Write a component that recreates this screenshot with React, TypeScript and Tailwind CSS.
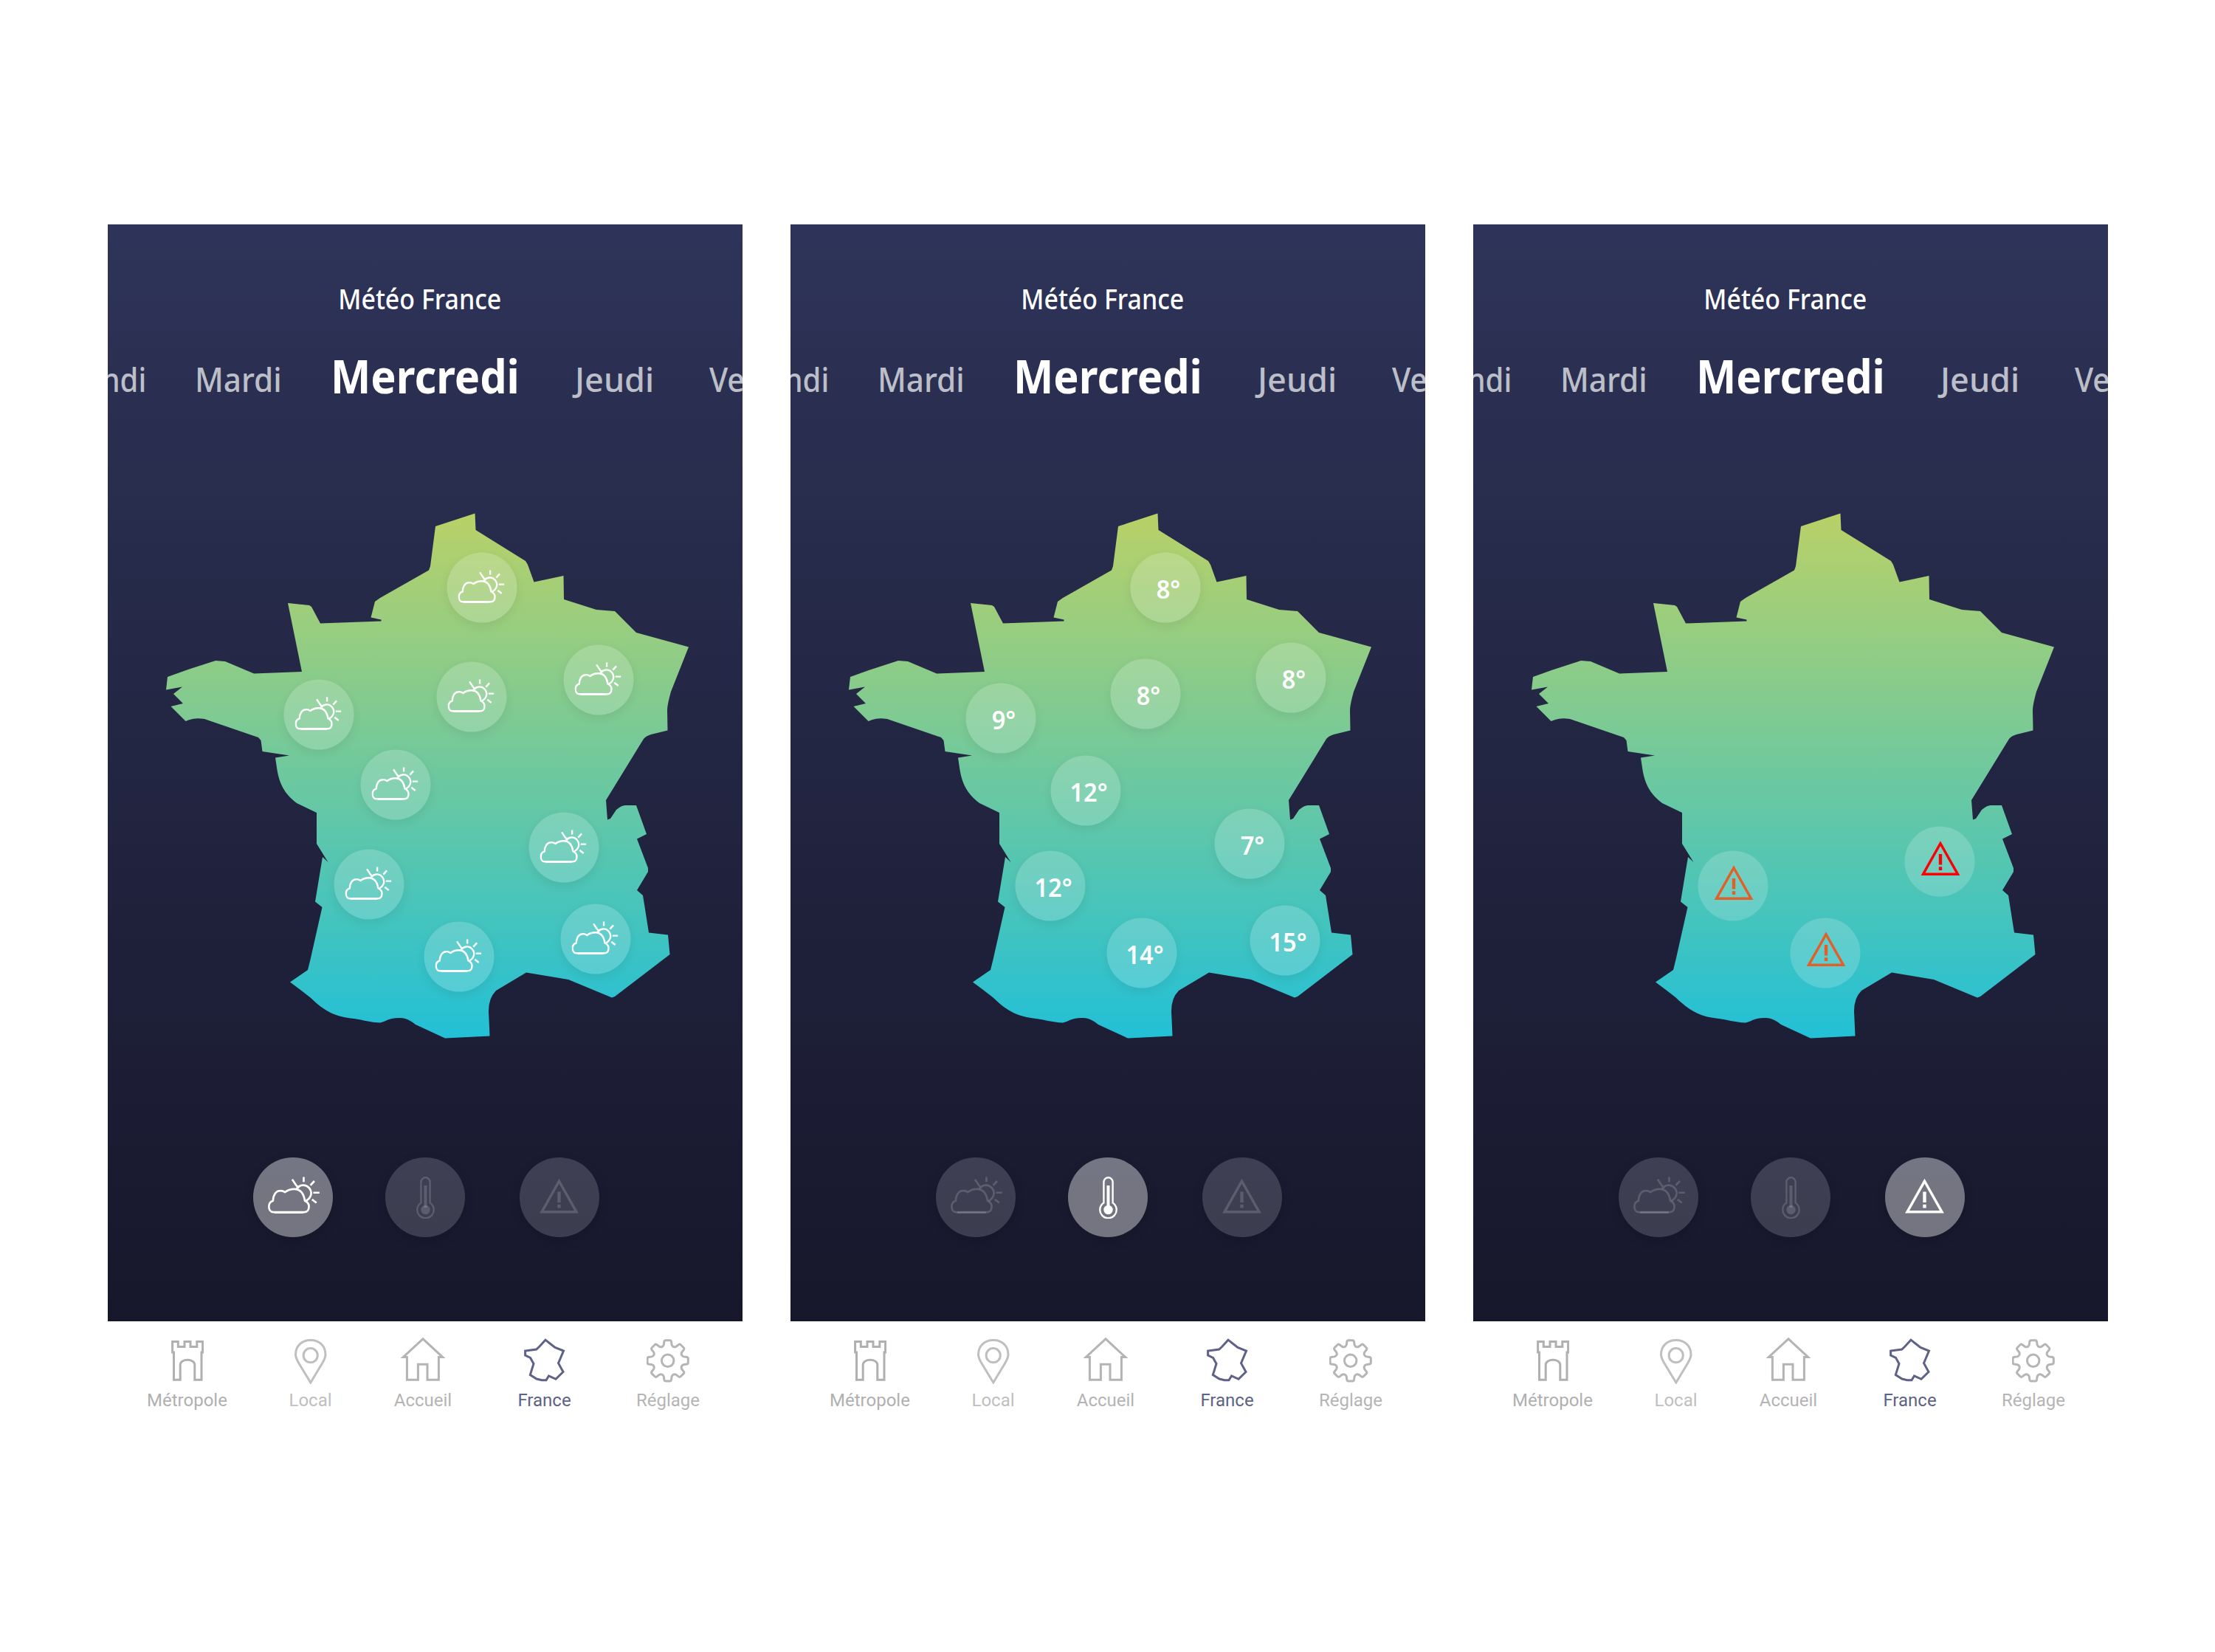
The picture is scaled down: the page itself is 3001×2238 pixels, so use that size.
import type { ReactNode } from "react";

type Mode = "weather" | "temperature" | "alert";

const FRANCE =
  "M390 817L419 820L422 822L434 844.5L516.5 841.5V839.5L502.5 836.5L508 815L515 810L581 772.5L583 767L590 713L643.5 695.5L644.5 718L712 760L715 765L723.5 788.5L763.5 780L764 812L808 826L833 828L862 857L933 876.5L909 937Q904 955 904 962L904.5 989.5L882 995Q875 997 872 1001L821 1084L823 1110.5L827 1109L835 1097Q842 1091 847 1091H862L876 1130L863 1136.5L878 1176V1181L863 1206L871 1213L879 1263.5L905 1266.5L907.5 1293L833 1350L829 1351.5L770 1327L713 1317.5L672 1342Q662 1352 662 1370L663.5 1403.5L603 1406.5L563 1388C553 1380 548 1379 540 1379C527 1379 525 1383 515 1385.5C500 1385 490 1381 475 1379.5C450 1376 438 1368 420 1351Q406 1340 393 1330.5L417 1314L420.5 1300L436.5 1229L427 1221.5L437 1161L444.5 1168L429 1143V1101L402 1088C385 1075 378 1061 375 1040L373 1026.5L392 1023.5L355.5 1018L353.5 1003L350 999L277 974Q265 972 257 975L251.5 977L231.5 957L248 953L235 940L247 930.5L225 934.5L227 917L252 908L292 895L305 896L344 912.5L409 910Z";

function CloudSun({ className }: { className: string }) {
  return (
    <svg viewBox="0 0 63 45" className={className} fill="none" stroke="currentColor" strokeWidth="2.4" strokeLinejoin="round">
      <path d="M6.5 43.3C3 43.3 1.2 40 1.2 36.5C1.2 33 3 30.5 6.2 29.5C6.5 22 10 17.2 15 17.2C17.5 17 19.3 17.8 21 19C23.5 16.8 28 15 33 15.2C40.5 15.8 44 22.5 45 29.5C48.5 31 50 33.2 50 36.5C50 40.5 48 43.3 44.5 43.3Z" />
      <path d="M8 43.8H43" strokeWidth="2.6" />
      <path d="M35 14.5C39 9.5 46 9 50 13.5C54.5 18.5 53.5 25.5 46.5 29.5M43.6 .4V6.6M29.6 3.4L34.6 10.8L38 14M56.6 5.4L51.8 10.6M55.3 19.6H62.8M53.8 27.8L59.2 32" />
    </svg>
  );
}

function Thermometer({ className }: { className: string }) {
  return (
    <svg viewBox="0 0 25 57" className={className} fill="none" stroke="currentColor" strokeWidth="2.4">
      <path d="M6.4 35.6V7.4A6.1 6.1 0 0 1 18.6 7.4V35.6A11.2 11.2 0 1 1 6.4 35.6Z" />
      <path d="M12.5 12V42" strokeWidth="4" />
      <circle cx="12.5" cy="45" r="6.2" fill="currentColor" stroke="none" />
    </svg>
  );
}

function Warning({ className }: { className: string }) {
  return (
    <svg viewBox="0 0 53 48" className={className} fill="none" stroke="currentColor">
      <path d="M26.5 4.2L3 45.8H50Z" strokeWidth="3.4" />
      <path d="M26.5 18.5V33M26.5 35.8V40.6" strokeWidth="4.4" />
    </svg>
  );
}

const weatherPins = [
  [653, 796], [811, 920.5], [639, 944], [431.5, 968], [536, 1063],
  [500, 1197.5], [763.5, 1147.5], [806.5, 1272], [622, 1296],
];
const temperaturePins: [number, number, string][] = [
  [507.5, 796, "8"], [677.5, 918.3, "8"], [481, 940, "8"], [285, 973, "9"], [400, 1071.3, "12"],
  [622, 1143, "7"], [352, 1200, "12"], [476, 1291, "14"], [670, 1274, "15"],
];
const alertPins: [number, number, string][] = [
  [352.3, 1200, "text-[#e35f28]"], [631.5, 1167, "text-[#fb0006]"], [476.5, 1290.5, "text-[#e35f28]"],
];

function Pin({ x, y, shadow = true, children }: { x: number; y: number; shadow?: boolean; children: ReactNode }) {
  return (
    <div
      className={`absolute size-[95px] -translate-1/2 rounded-full bg-white/18 flex items-center justify-center ${shadow ? "shadow-[0_5px_14px_rgba(0,0,0,0.07)]" : ""}`}
      style={{ left: x, top: y }}
    >
      {children}
    </div>
  );
}

function FranceMap({ mode }: { mode: Mode }) {
  return (
    <div className="relative mt-[154px] ml-[79px] h-[712px] w-[709px]">
      <svg viewBox="225 695 709 712" className="block h-[712px] w-[709px]">
        <defs>
          <linearGradient id={`land-${mode}`} x1="0" y1="0" x2="0" y2="1">
            <stop offset="0" stopColor="#b9d167" />
            <stop offset="1" stopColor="#22c0d7" />
          </linearGradient>
        </defs>
        <path d={FRANCE} fill={`url(#land-${mode})`} />
      </svg>
      {mode === "weather" &&
        weatherPins.map(([x, y]) => (
          <Pin key={`${x}`} x={x - 225} y={y - 695}>
            <CloudSun className="mr-[2px] h-[45px] w-[63px] -translate-y-[1.5px] text-white" />
          </Pin>
        ))}
      {mode === "temperature" &&
        temperaturePins.map(([x, y, t]) => (
          <Pin key={`${x}`} x={x - 79} y={y - 695}>
            <span className="flex translate-x-1 translate-y-[1px] scale-x-[0.93] font-['Noto_Sans'] text-[35px] leading-[40px] font-semibold text-white">
              {t}°
            </span>
          </Pin>
        ))}
      {mode === "alert" &&
        alertPins.map(([x, y, tone]) => (
          <Pin key={`${x}`} x={x - 79} y={y - 695} shadow={false}>
            <Warning className={`h-[48px] w-[53px] translate-x-[1px] -translate-y-[5px] ${tone}`} />
          </Pin>
        ))}
    </div>
  );
}

function ModeButton({ active, className = "", children }: { active: boolean; className?: string; children: ReactNode }) {
  return (
    <button
      className={`flex size-[108px] items-center justify-center rounded-full shadow-[0_5px_16px_rgba(0,0,0,0.12)] ${active ? "bg-white/40 text-white" : "bg-white/16 text-white/16"} ${className}`}
    >
      {children}
    </button>
  );
}

const GEAR_X = 28.7;
const GEAR_Y = 32.3;

function gearPath() {
  // Point at offset x along the tooth and radius r, rotated by angle a around the hub.
  const at = (x: number, r: number, a: number) => {
    const c = Math.cos(a);
    const s = Math.sin(a);
    return `${(GEAR_X + x * c + r * s).toFixed(2)} ${(GEAR_Y + x * s - r * c).toFixed(2)}`;
  };
  let d = "";
  for (let k = 0; k < 8; k++) {
    const a = (k * Math.PI) / 4;
    d += `${k ? "L" : "M"}${at(-5.4, 21.5, a)}L${at(-4.8, 26, a)}Q${at(-4.4, 27.6, a)} ${at(-2.8, 27.6, a)}`;
    d += `L${at(2.8, 27.6, a)}Q${at(4.4, 27.6, a)} ${at(4.8, 26, a)}L${at(5.4, 21.5, a)}`;
    d += `Q${at(0, 18.6, a + Math.PI / 8)} ${at(-5.4, 21.5, a + Math.PI / 4)}`;
  }
  return d + "Z";
}

const tabs = [
  {
    label: "Métropole", box: "w-[107px] ml-[54px]", tone: "text-[#b0b0b0]", w: "w-[44px]", vb: "0 0 44 64",
    art: <path d="M1.6 6.5H9.3V13.5H18V6.5H26V13.5H34.8V6.5H42.6V21H41V58.3H31.8V38C31.8 29 12.2 29 12.2 38V58.3H3.5V21H1.6Z" />,
  },
  {
    label: "Local", box: "w-[57px] ml-[85px]", tone: "text-[#bfbfbf]", w: "w-[44px]", vb: "0 0 44 64",
    art: (
      <>
        <path d="M21.8 62L6 36C2.5 30 1.5 27.5 1.5 24C1.5 12.5 10 4.5 21.8 4.5S42 12.5 42 24C42 27.5 41 30 37.5 36Z" />
        <circle cx="21.7" cy="25.2" r="9.6" />
      </>
    ),
  },
  {
    label: "Accueil", box: "w-[78px] ml-[85px]", tone: "text-[#b4b4b4]", w: "w-[60px]", vb: "0 0 60 64",
    art: <path d="M30 2.8L3.4 27.4H8.4V58.3H23.4V37.3H36V58.3H51.4V27.4H56.6Z" />,
  },
  {
    label: "France", box: "w-[71px] ml-[90px]", tone: "text-[#5d6286]", w: "w-[56px]", vb: "0 0 56 64",
    art: <path d="M29 4.2L21 13L16.7 17L1.6 19V25L8.5 28.3L13 36.5L8.3 51.5L17 57L24 58.7H30L33.5 53L43 57.3L53 47.5L46.5 35.7L53.5 19L42 14.5L35 9Z" />,
  },
  {
    label: "Réglage", box: "w-[86px] ml-[89px]", tone: "text-[#b5b5b5]", w: "w-[58px]", vb: "0 0 58 64",
    art: (
      <>
        <path d={gearPath()} />
        <circle cx={GEAR_X} cy={GEAR_Y} r="8.2" />
      </>
    ),
  },
];

function TabBar() {
  return (
    <nav className="flex h-[130px] bg-white pt-[21px]">
      {tabs.map((t) => (
        <div key={t.label} className={`flex shrink-0 flex-col items-center ${t.box} ${t.tone}`}>
          <svg viewBox={t.vb} className={`h-[64px] shrink-0 ${t.w}`} fill="none" stroke="currentColor" strokeWidth="3">
            {t.art}
          </svg>
          <span className="mt-2 font-[Roboto] text-[24px] leading-[28px] whitespace-nowrap">{t.label}</span>
        </div>
      ))}
    </nav>
  );
}

function Day({ label, box, text }: { label: string; box: string; text: string }) {
  return (
    <div className={`flex shrink-0 whitespace-nowrap ${box}`}>
      <span className={`block shrink-0 leading-[64px] ${text}`}>{label}</span>
    </div>
  );
}

function Phone({ mode }: { mode: Mode }) {
  const side = "mt-[5px] origin-left text-[45px] font-medium text-white/70";
  return (
    <section className="w-[860px]">
      <div className="flex h-[1486px] flex-col overflow-hidden bg-linear-to-b from-[#2e3459] to-[#17172b] pt-[80px] font-['Noto_Sans']">
        <h1 className="ml-[-14px] text-center text-[38px] leading-[40px] font-medium whitespace-nowrap text-white">
          <span className="inline-block scale-x-[0.893]">Météo France</span>
        </h1>
        <div className="mt-[53px] flex h-[64px]">
          <Day label="ndi" box="w-[52px] justify-end" text="mt-[5px] origin-right scale-x-[0.89] text-[45px] font-medium text-white/70" />
          <Day label="Mardi" box="w-[113px] ml-[66px]" text={`scale-x-[0.94] ${side}`} />
          <Day label="Mercredi" box="w-[249px] ml-[71px]" text="origin-left scale-x-[0.915] text-[63px] font-bold text-white" />
          <Day label="Jeudi" box="w-[107px] ml-[82px]" text={`scale-x-[1.0] ${side}`} />
          <Day label="Ve" box="w-[47px] ml-[75px]" text={`scale-x-[0.91] ${side}`} />
        </div>
        <FranceMap mode={mode} />
        <div className="mt-[161px] flex pl-[197px]">
          <ModeButton active={mode === "weather"}>
            <CloudSun className="mr-[-1px] h-[50px] w-[70px] -translate-y-[3px]" />
          </ModeButton>
          <ModeButton active={mode === "temperature"} className="ml-[71px]">
            <Thermometer className="h-[57px] w-[25px]" />
          </ModeButton>
          <ModeButton active={mode === "alert"} className="ml-[74px]">
            <Warning className="h-[48px] w-[53px] -translate-x-[1px] -translate-y-[2px]" />
          </ModeButton>
        </div>
      </div>
      <TabBar />
    </section>
  );
}

export default function App() {
  return (
    <main className="flex h-[2238px] w-[3001px] gap-[65px] bg-white pt-[304px] pl-[146px]">
      <Phone mode="weather" />
      <Phone mode="temperature" />
      <Phone mode="alert" />
    </main>
  );
}
